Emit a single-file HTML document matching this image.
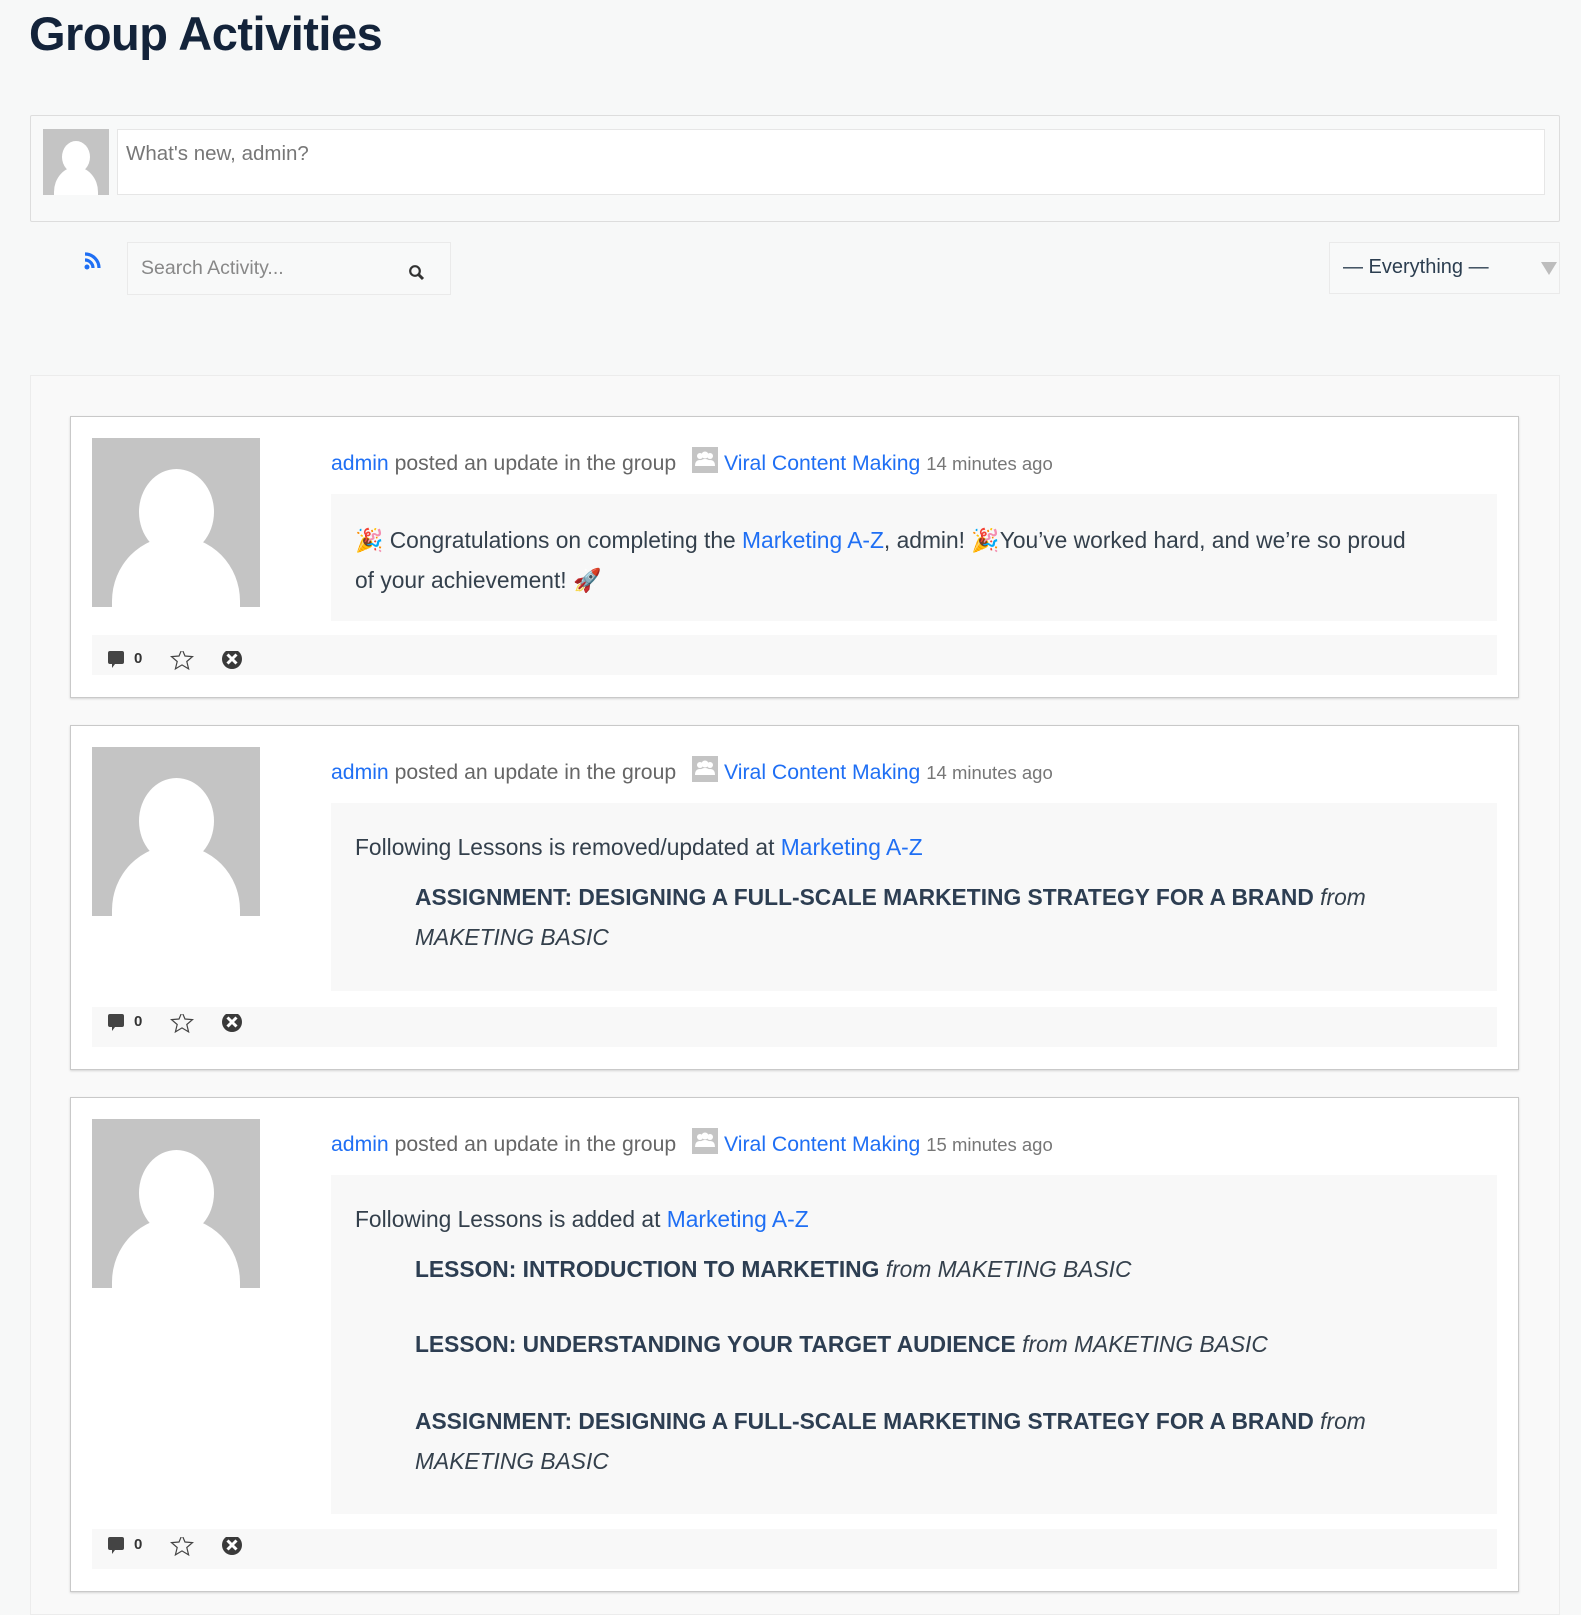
<!DOCTYPE html>
<html><head><meta charset="utf-8"><style>
*{box-sizing:border-box;margin:0;padding:0}
body{width:1581px;height:1600px;background:#f7f8f8;font-family:"Liberation Sans",sans-serif;position:relative;overflow:hidden;color:#3b4650}
.a{position:absolute}
h1{position:absolute;left:29px;top:6px;font-size:47px;font-weight:bold;color:#13233a;letter-spacing:-0.5px}
.av{position:absolute;background:#c4c4c4;overflow:hidden}
.av i{position:absolute;background:#fff;border-radius:50%}
a{color:#1f6ff4;text-decoration:none}
.card{position:absolute;left:70px;width:1449px;background:#fff;border:1px solid #c9c9c9;box-shadow:0 1px 2px rgba(0,0,0,.15)}
.hd{position:absolute;left:260px;font-size:21.2px;color:#666;white-space:nowrap}
.hd .t{font-size:18.5px;color:#777}
.gi{display:inline-block;width:26px;height:26px;background:#c4c4c4;vertical-align:-3px;margin:0 6px 0 10px;position:relative}
.ct{position:absolute;left:260px;width:1166px;background:#f8f8f8;font-size:22.8px;color:#34404c;padding:0 24px}
.ft{position:absolute;left:21px;width:1405px;height:40px;background:#f8f8f8}
.li{padding-left:60px;line-height:40px}
.li b{color:#2d3e52}
.li em{font-style:italic}
</style></head><body>
<svg width="0" height="0" style="position:absolute"><defs>
<g id="ic">
<path d="M0 2a2 2 0 0 1 2-2h12a2 2 0 0 1 2 2v9a2 2 0 0 1-2 2H7l-3 4v-4H2a2 2 0 0 1-2-2z" fill="#444"/>
<text x="26" y="12" font-family="Liberation Sans" font-weight="bold" font-size="15" fill="#333">0</text>
<path d="M74 -2l3 7 7.5 .6-5.7 4.9 1.8 7.4-6.6-4-6.6 4 1.8-7.4-5.7-4.9 7.5-.6z" fill="none" stroke="#444" stroke-width="1.2"/>
<circle cx="124" cy="8" r="10" fill="#3a3a3a"/><path d="M119.5 3.5l9 9M128.5 3.5l-9 9" stroke="#fff" stroke-width="3"/>
</g>
<g id="ppl" fill="#fff"><circle cx="8" cy="9" r="3"/><circle cx="18" cy="9" r="3"/><circle cx="13" cy="8" r="3.5"/><path d="M3 19q0-6 5-6t5 6zM13 19q0-6 5-6t5 6z"/><path d="M7 19q0-7 6-7t6 7z"/></g>
</defs></svg>
<h1>Group Activities</h1>
<div class="a" style="left:30px;top:115px;width:1530px;height:107px;border:1px solid #ddd;background:#f8f9f9;border-radius:2px"></div>
<div class="av" style="left:43px;top:129px;width:66px;height:66px"><i style="left:19px;top:12px;width:28px;height:32px"></i><i style="left:11px;top:38px;width:44px;height:50px;border-radius:50% 50% 0 0"></i></div>
<div class="a" style="left:117px;top:129px;width:1428px;height:66px;background:#fff;border:1px solid #e6e6e6;font-size:20.5px;color:#777;padding:12px 8px">What's new, admin?</div>
<svg class="a" style="left:84px;top:252px" width="20" height="20" viewBox="0 0 20 20"><circle cx="3" cy="15" r="2.5" fill="#1f6ff4"/><path d="M1 8a8 8 0 0 1 8 8M1 2a14 14 0 0 1 14 14" stroke="#1f6ff4" stroke-width="3.2" fill="none"/></svg>
<div class="a" style="left:127px;top:242px;width:324px;height:53px;border:1px solid #eaeaea;background:#f8f9f9;font-size:19.5px;color:#888;padding:14px 13px">Search Activity...</div>
<svg class="a" style="left:408px;top:264px" width="18" height="18" viewBox="0 0 18 18"><circle cx="7" cy="7" r="4.8" stroke="#333" stroke-width="2.2" fill="none"/><path d="M10.5 10.5L15 15" stroke="#333" stroke-width="3"/></svg>
<div class="a" style="left:1329px;top:242px;width:231px;height:52px;border:1px solid #eaeaea;background:#f8f9f9;font-size:20px;color:#2c3e50;padding:13px 13px">— Everything —</div>
<div class="a" style="left:1541px;top:262px;width:0;height:0;border-left:8px solid transparent;border-right:8px solid transparent;border-top:13px solid #bdbdbd"></div>
<div class="a" style="left:30px;top:375px;width:1530px;height:1240px;border:1px solid #ececec;background:#f9f9f9"></div>

<div class="card" style="top:416px;height:282px">
<div class="av" style="left:21px;top:21px;width:168px;height:169px"><i style="left:47px;top:31px;width:75px;height:86px"></i><i style="left:20px;top:98px;width:128px;height:130px;border-radius:50% 50% 0 0"></i></div>
<div class="hd" style="top:30px"><a>admin</a> posted an update in the group <span class="gi"><svg width="26" height="26"><use href="#ppl"/></svg></span><a>Viral Content Making</a> <span class="t">14 minutes ago</span></div>
<div class="ct" style="top:77px;height:127px;padding-top:26px;line-height:40px">🎉 Congratulations on completing the <a>Marketing A-Z</a>, admin! 🎉You’ve worked hard, and we’re so proud<br>of your achievement! 🚀</div>
<div class="ft" style="top:218px"></div>
</div>

<div class="card" style="top:725px;height:345px">
<div class="av" style="left:21px;top:21px;width:168px;height:169px"><i style="left:47px;top:31px;width:75px;height:86px"></i><i style="left:20px;top:98px;width:128px;height:130px;border-radius:50% 50% 0 0"></i></div>
<div class="hd" style="top:30px"><a>admin</a> posted an update in the group <span class="gi"><svg width="26" height="26"><use href="#ppl"/></svg></span><a>Viral Content Making</a> <span class="t">14 minutes ago</span></div>
<div class="ct" style="top:77px;height:188px;padding-top:24px;line-height:40px">Following Lessons is removed/updated at <a>Marketing A-Z</a>
<div class="li" style="margin-top:10px;padding-right:90px"><b>ASSIGNMENT: DESIGNING A FULL-SCALE MARKETING STRATEGY FOR A BRAND</b> <em>from MAKETING BASIC</em></div></div>
<div class="ft" style="top:281px"></div>
</div>

<div class="card" style="top:1097px;height:495px">
<div class="av" style="left:21px;top:21px;width:168px;height:169px"><i style="left:47px;top:31px;width:75px;height:86px"></i><i style="left:20px;top:98px;width:128px;height:130px;border-radius:50% 50% 0 0"></i></div>
<div class="hd" style="top:30px"><a>admin</a> posted an update in the group <span class="gi"><svg width="26" height="26"><use href="#ppl"/></svg></span><a>Viral Content Making</a> <span class="t">15 minutes ago</span></div>
<div class="ct" style="top:77px;height:339px;padding-top:24px;line-height:40px">Following Lessons is added at <a>Marketing A-Z</a>
<div class="li" style="margin-top:10px"><b>LESSON: INTRODUCTION TO MARKETING</b> <em>from MAKETING BASIC</em></div>
<div class="li" style="margin-top:35px"><b>LESSON: UNDERSTANDING YOUR TARGET AUDIENCE</b> <em>from MAKETING BASIC</em></div>
<div class="li" style="margin-top:37px;padding-right:90px"><b>ASSIGNMENT: DESIGNING A FULL-SCALE MARKETING STRATEGY FOR A BRAND</b> <em>from MAKETING BASIC</em></div></div>
<div class="ft" style="top:431px"></div>
</div>

<svg class="a" style="left:108px;top:651px" width="150" height="24"><use href="#ic"/></svg>
<svg class="a" style="left:108px;top:1014px" width="150" height="24"><use href="#ic"/></svg>
<svg class="a" style="left:108px;top:1537px" width="150" height="24"><use href="#ic"/></svg>
</body></html>
